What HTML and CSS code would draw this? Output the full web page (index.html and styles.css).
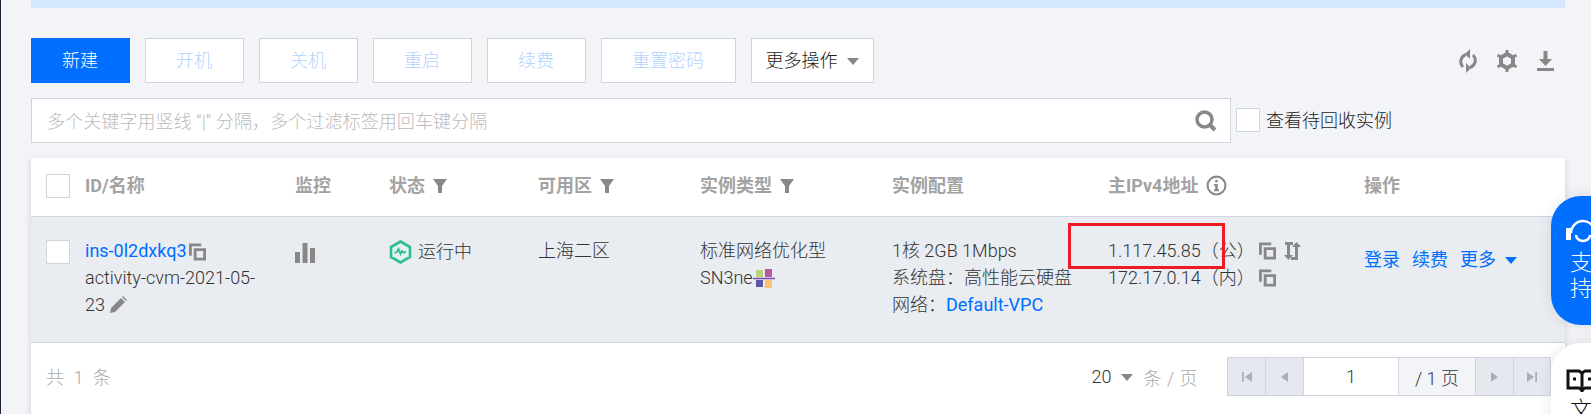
FILE: index.html
```html
<!DOCTYPE html>
<html lang="zh-CN">
<head>
    <meta charset="UTF-8">
    <title>实例列表</title>
    <link rel="stylesheet" href="styles.css">
</head>
<body>
    <svg class="defs" width="0" height="0">
        <symbol id="i-copy" viewBox="0 0 18 18">
            <path d="M0 0h13v3H3v10H0z"/>
            <path fill-rule="evenodd" d="M5 5h13v13H5zM8 8v7h7V8z"/>
        </symbol>
        <symbol id="i-filter" viewBox="0 0 14 14">
            <path d="M0 0h14L9 7v7H5V7z"/>
        </symbol>
    </svg>

    <div class="page">
        <div class="banner"></div>

        <div class="toolbar">
            <button class="btn btn-primary">新建</button>
            <button class="btn btn-off">开机</button>
            <button class="btn btn-off">关机</button>
            <button class="btn btn-off">重启</button>
            <button class="btn btn-off">续费</button>
            <button class="btn btn-off btn-wide">重置密码</button>
            <button class="btn btn-more">更多操作<span class="caret"></span></button>
            <div class="tools">
                <svg width="18" height="24" viewBox="0 0 18 24" fill="none" stroke="#888" stroke-width="3">
                    <path d="M7 5.500A7.500 7.500 0 0 0 4 18"/>
                    <path d="M11 18.500A7.500 7.500 0 0 0 14 6"/>
                    <path d="M11 0v10L6 5z" fill="#888" stroke="none"/>
                    <path d="M7 24V14l5 5z" fill="#888" stroke="none"/>
                </svg>
                <svg width="20" height="22" viewBox="0 0 20 22" fill="none" stroke="#888">
                    <path d="M10 4l6 3.500v7L10 18l-6-3.500v-7z" stroke-width="4"/>
                    <path d="M10 0v4M10 18v4M0.500 5l3.500 2M16 15l3.500 2M0.500 17L4 15M16 7l3.500-2" stroke-width="3"/>
                </svg>
                <svg width="17" height="20" viewBox="0 0 17 20" fill="#888">
                    <path d="M6.500 0h4v8H15l-6.500 7L2 8h4.500z"/>
                    <path d="M0 17h17v3H0z"/>
                </svg>
            </div>
        </div>

        <div class="search-row">
            <div class="search">
                <span class="placeholder">多个关键字用竖线 “|” 分隔，多个过滤标签用回车键分隔</span>
                <svg width="22" height="22" viewBox="0 0 22 22" fill="none" stroke="#888">
                    <circle cx="9.500" cy="9.500" r="7.500" stroke-width="3.500"/>
                    <path d="M15 15l5 5" stroke-width="4"/>
                </svg>
            </div>
            <span class="check"></span>
            <span class="check-label">查看待回收实例</span>
        </div>

        <div class="panel">
            <table class="grid">
                <colgroup>
                    <col class="c-check"><col class="c-id"><col class="c-mon"><col class="c-status">
                    <col class="c-zone"><col class="c-type"><col class="c-conf"><col class="c-ip"><col>
                </colgroup>
                <thead>
                    <tr>
                        <th><span class="check"></span></th>
                        <th>ID/名称</th>
                        <th>监控</th>
                        <th>状态<svg class="th-icon"><use href="#i-filter"/></svg></th>
                        <th>可用区<svg class="th-icon"><use href="#i-filter"/></svg></th>
                        <th>实例类型<svg class="th-icon"><use href="#i-filter"/></svg></th>
                        <th>实例配置</th>
                        <th>主IPv4地址
                            <svg class="th-info" width="21" height="21" viewBox="0 0 20 20">
                                <circle cx="10" cy="10" r="8.500" fill="none" stroke="#888" stroke-width="2"/>
                                <path d="M8.800 4.500h2.400v2.400H8.800zM7.800 8.500h3.400v5h1.200v2H7.600v-2h1.200v-3h-1z" fill="#888"/>
                            </svg>
                        </th>
                        <th>操作</th>
                    </tr>
                </thead>
                <tbody>
                    <tr>
                        <td><span class="check check-row"></span></td>
                        <td>
                            <a class="link">ins-0l2dxkq3</a><svg class="copy copy-id"><use href="#i-copy"/></svg><br>
                            activity-cvm-2021-05-<br>
                            23<svg class="pencil" width="17" height="17" viewBox="0 0 17 17" fill="#888">
                                <path d="M0 17l1-5L11 2l4 4L5 16z"/>
                                <path d="M12 1l1-1 4 4-1 1z"/>
                            </svg>
                        </td>
                        <td>
                            <svg class="bars" width="20" height="20" viewBox="0 0 20 20" fill="#888">
                                <path d="M0 9h5v11H0zM7.500 0h5v20h-5zM15 5h5v15h-5z"/>
                            </svg>
                        </td>
                        <td>
                            <div class="status">
                                <svg width="23" height="24" viewBox="0 0 23 24">
                                    <path d="M11.500 1.500l9.500 5.500v10l-9.500 5.500L2 17V7z" fill="#e3f2ee" stroke="#2bbd93" stroke-width="2.600"/>
                                    <path d="M5.500 13l2.500-1 1.500-3 2 5 1.500-3 1 1.500 3-.5" fill="none" stroke="#2bbd93" stroke-width="1.800"/>
                                </svg>
                                运行中
                            </div>
                        </td>
                        <td>上海二区</td>
                        <td>
                            标准网络优化型<br>
                            SN3ne<svg class="badge" width="22" height="23" viewBox="0 0 22 23">
                                <path d="M3 3h7v7H3z" fill="#b9d17c"/>
                                <path d="M12 2h7v8h-7z" fill="#b8589f"/>
                                <path d="M3 13h7v7H3z" fill="#5d55a8"/>
                                <path d="M12 13h7v8h-7z" fill="#fbc36f"/>
                                <path d="M0 11.500h22" stroke="#7a48b0" stroke-width="1.500"/>
                            </svg>
                        </td>
                        <td>
                            1核 2GB 1Mbps<br>
                            系统盘：高性能云硬盘<br>
                            网络：<a class="link">Default-VPC</a>
                        </td>
                        <td>
                            <div class="ip-line">
                                <span class="ip-text">1.117.45.85（公）</span>
                                <svg class="copy"><use href="#i-copy"/></svg>
                                <svg class="swap" width="19" height="18" viewBox="0 0 19 18" fill="#888">
                                    <path d="M2 0h8v3H7v10h3l-4.500 5L1 13h3V3H2z"/>
                                    <path d="M13.500 0L18 5h-3v13H8v-3h4V5H9z"/>
                                </svg>
                            </div>
                            <div class="ip-line">
                                <span class="ip-text">172.17.0.14（内）</span>
                                <svg class="copy"><use href="#i-copy"/></svg>
                            </div>
                        </td>
                        <td>
                            <div class="ops">
                                <a class="link">登录</a>
                                <a class="link">续费</a>
                                <a class="link">更多<span class="caret caret-blue"></span></a>
                            </div>
                        </td>
                    </tr>
                </tbody>
            </table>

            <div class="pager">
                <span class="total">共 1 条</span>
                <span class="per-page">20<span class="caret"></span></span>
                <span class="per-unit">条 / 页</span>
                <div class="pages">
                    <span class="pg pg-a">
                        <svg width="10" height="12" viewBox="0 0 14 16" fill="#a9afb9"><path d="M0 1h2.500v14H0zM14 1v14L4 8z"/></svg>
                    </span>
                    <span class="pg pg-b">
                        <svg width="7" height="12" viewBox="0 0 10 16" fill="#a9afb9"><path d="M10 1v14L0 8z"/></svg>
                    </span>
                    <span class="pg pg-num">1</span>
                    <span class="pg pg-of">/ 1 页</span>
                    <span class="pg pg-b">
                        <svg width="7" height="12" viewBox="0 0 10 16" fill="#a9afb9"><path d="M0 1v14l10-7z"/></svg>
                    </span>
                    <span class="pg pg-a">
                        <svg width="10" height="12" viewBox="0 0 14 16" fill="#a9afb9"><path d="M14 1h-2.500v14H14zM0 1v14l10-7z"/></svg>
                    </span>
                </div>
            </div>
        </div>
    </div>

    <div class="marker"></div>

    <div class="side side-support">
        <svg width="32" height="32" viewBox="0 0 32 32" fill="none" stroke="#fff" stroke-width="2.500">
            <path d="M5 15A12 12 0 0 1 29 15"/>
            <path d="M10 17a7 6 0 0 0 14 0"/>
            <path d="M0 10h5v12H0z" fill="#fff" stroke="none"/>
            <path d="M25 29h7"/>
        </svg>
        <span>支<br>持</span>
    </div>
    <div class="side side-docs">
        <svg width="32" height="26" viewBox="0 0 32 26" fill="none" stroke="#111" stroke-width="3">
            <path d="M2 3h11l3 2 3-2h11v17H19l-3 2-3-2H2z"/>
            <path d="M16 5v19"/>
            <path d="M7 11h3M22 11h3" stroke-width="3"/>
        </svg>
        <span>文</span>
    </div>
</body>
</html>
```

FILE: styles.css
```css
html, body {
    margin: 0;
    height: 414px;
    overflow: hidden;
}
body {
    position: relative;
    background-color: #f2f4f8;
    border-left: 1px solid #20243a;
    font-family: Roboto, "Noto Sans CJK SC", sans-serif;
    font-size: 18px;
    font-weight: 300;
    color: #333;
}
.defs {
    position: absolute;
}
.page {
    width: 1534px;
    margin-left: 30px;
}
.banner {
    height: 8px;
    background-color: #d5e7ff;
}
.toolbar {
    display: flex;
    align-items: center;
    gap: 15px;
    margin-top: 30px;
    height: 45px;
}
.btn {
    width: 99px;
    height: 45px;
    padding: 0 1px 3px 0;
    border: 1px solid #cfd5de;
    background: #fff;
    font: inherit;
}
.btn-primary {
    background: #006eff;
    border-color: #006eff;
    color: #fff;
}
.btn-off {
    color: #b2d4ff;
}
.btn-wide {
    width: 135px;
}
.btn-more {
    width: 123px;
    color: #222;
}
.caret {
    display: inline-block;
    width: 0;
    height: 0;
    margin-left: 9px;
    border-left: 6px solid transparent;
    border-right: 6px solid transparent;
    border-top: 7px solid #888;
    vertical-align: 2px;
}
.caret-blue {
    border-top-color: #006eff;
}
.tools {
    display: flex;
    align-items: center;
    gap: 20px;
    margin-left: auto;
    padding-right: 11px;
}
.search-row {
    display: flex;
    align-items: center;
    margin-top: 15px;
}
.search {
    display: flex;
    align-items: center;
    justify-content: space-between;
    box-sizing: border-box;
    width: 1200px;
    height: 45px;
    padding: 0 13px 0 15px;
    border: 1px solid #cfd5de;
    background: #fff;
}
.placeholder {
    margin-top: -2px;
    color: #bbb;
    letter-spacing: 0.1px;
}
.check {
    display: inline-block;
    box-sizing: border-box;
    width: 24px;
    height: 24px;
    border: 1px solid #cfd5de;
    background: #fff;
    vertical-align: middle;
}
.search-row .check {
    margin: -2px 0 0 5px;
}
.check-label {
    margin: -4px 0 0 6px;
    color: #222;
}
.panel {
    margin-top: 15px;
    height: 300px;
    background: #fff;
    box-shadow: 0 2px 6px rgba(54, 58, 80, 0.2);
}
.grid {
    width: 100%;
    table-layout: fixed;
    border-collapse: collapse;
}
.c-check { width: 54px; }
.c-id { width: 210px; }
.c-mon { width: 94px; }
.c-status { width: 149px; }
.c-zone { width: 162px; }
.c-type { width: 192px; }
.c-conf { width: 216px; }
.c-ip { width: 256px; }
.grid th {
    height: 52px;
    padding: 0 0 6px;
    text-align: left;
    font-weight: 700;
    color: #a3a3a3;
    border-bottom: 1px solid #cfd5de;
}
.grid th:first-child {
    padding-bottom: 3px;
}
.grid th:first-child,
.grid td:first-child {
    padding-left: 15px;
}
.th-icon {
    width: 14px;
    height: 14px;
    margin-left: 8px;
    fill: #888;
    vertical-align: -1px;
}
.th-info {
    margin-left: 3px;
    vertical-align: -4px;
}
.grid td {
    height: 105px;
    padding: 20px 0 0;
    vertical-align: top;
    line-height: 27px;
    background: #e9ecf1;
    border-bottom: 1px solid #cfd5de;
}
.check-row {
    display: block;
    margin-top: 3px;
}
.link {
    color: #006eff;
    font-weight: 400;
}
.copy {
    width: 17px;
    height: 18px;
    margin-left: 4px;
    fill: #888;
    vertical-align: -4px;
}
.copy-id {
    margin-left: 2px;
}
.pencil {
    margin-left: 5px;
    vertical-align: -2px;
}
.bars {
    display: block;
    margin-top: 6px;
}
.status {
    display: flex;
    align-items: center;
    gap: 6px;
    margin-top: 1px;
}
.badge {
    vertical-align: -6px;
}
.ip-line {
    display: flex;
    align-items: center;
}
.ip-text {
    width: 147px;
}
.swap {
    margin-left: 7px;
}
.ops {
    display: flex;
    gap: 12px;
    margin-top: 9px;
}
.pager {
    display: flex;
    align-items: center;
    height: 39px;
    padding: 14px 14px 0 15px;
}
.total {
    margin-top: -2px;
    color: #aaa;
    word-spacing: 3px;
    letter-spacing: 1px;
}
.per-page {
    margin-left: auto;
}
.per-unit {
    margin-left: 11px;
    color: #aaa;
    letter-spacing: 0.5px;
}
.pages {
    display: flex;
    margin-left: 29px;
    height: 39px;
    border: 1px solid #cfd5de;
    box-sizing: border-box;
}
.pg {
    display: flex;
    align-items: center;
    justify-content: center;
    box-sizing: border-box;
    border-left: 1px solid #cfd5de;
    background: #e5e8ee;
}
.pg:first-child {
    border-left: 0;
}
.pg-a { width: 37px; }
.pg-b { width: 38px; }
.pg-num {
    width: 95px;
    background: #fff;
}
.pg-of {
    width: 77px;
    background: #f2f4f8;
}
.marker {
    position: absolute;
    left: 1067px;
    top: 223px;
    width: 157px;
    height: 46px;
    box-sizing: border-box;
    border: 3px solid #ed1c24;
}
.side {
    position: absolute;
    left: 1550px;
    width: 70px;
    box-sizing: border-box;
    padding-left: 15px;
    border-radius: 30px;
    box-shadow: 0 0 14px rgba(54, 58, 80, 0.12);
}
.side span {
    display: block;
    padding-left: 4px;
    font-size: 22px;
    line-height: 26px;
}
.side-support {
    top: 196px;
    height: 129px;
    padding-top: 22px;
    background: #006eff;
    color: #fff;
}
.side-support svg {
    display: block;
}
.side-docs {
    top: 343px;
    height: 110px;
    padding-top: 25px;
    background: #fff;
    color: #111;
}
.side-docs svg {
    display: block;
}
.side-docs span {
    margin-top: 3px;
}
```
